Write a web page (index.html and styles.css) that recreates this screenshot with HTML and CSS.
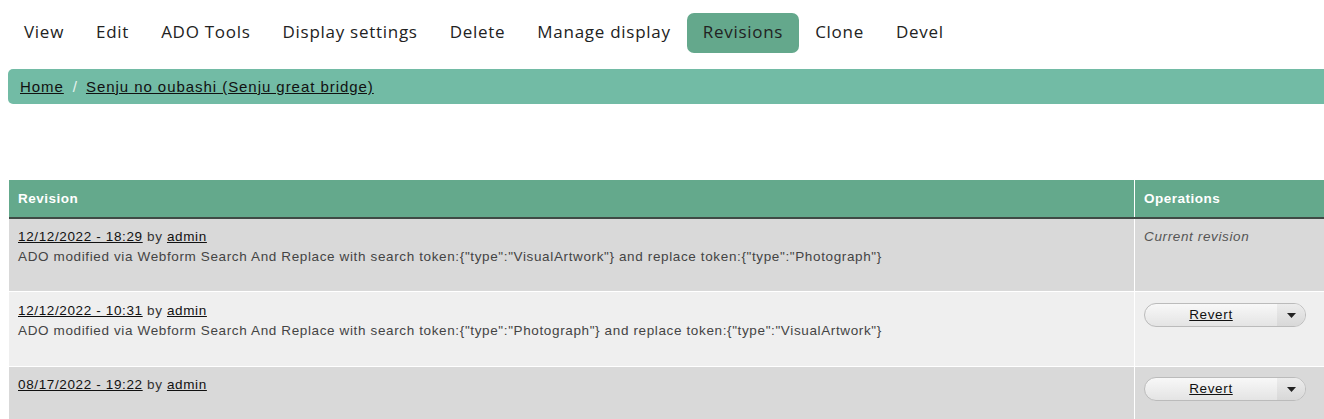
FILE: index.html
```html
<!DOCTYPE html>
<html>
<head>
<meta charset="utf-8">
<link rel="stylesheet" href="styles.css">
</head>
<body>
<nav class="tabs">
  <a class="tab" href="#">View</a>
  <a class="tab" href="#">Edit</a>
  <a class="tab" href="#">ADO Tools</a>
  <a class="tab" href="#">Display settings</a>
  <a class="tab" href="#">Delete</a>
  <a class="tab" href="#">Manage display</a>
  <a class="tab active" href="#">Revisions</a>
  <a class="tab" href="#">Clone</a>
  <a class="tab" href="#">Devel</a>
</nav>
<div class="breadcrumb">
  <a href="#">Home</a><span class="sep">/</span><a href="#">Senju no oubashi (Senju great bridge)</a>
</div>
<table class="revisions">
  <thead>
    <tr><th class="col-rev">Revision</th><th class="col-ops">Operations</th></tr>
  </thead>
  <tbody>
    <tr class="odd">
      <td><div class="meta"><a href="#">12/12/2022 - 18:29</a> by <a href="#">admin</a></div>
        <div class="msg">ADO modified via Webform Search And Replace with search token:{"type":"VisualArtwork"} and replace token:{"type":"Photograph"}</div></td>
      <td class="ops"><em class="current">Current revision</em></td>
    </tr>
    <tr class="even">
      <td><div class="meta"><a href="#">12/12/2022 - 10:31</a> by <a href="#">admin</a></div>
        <div class="msg">ADO modified via Webform Search And Replace with search token:{"type":"Photograph"} and replace token:{"type":"VisualArtwork"}</div></td>
      <td class="ops"><div class="dropbutton"><a class="main" href="#">Revert</a><span class="toggle"><svg width="9" height="5" viewBox="0 0 9 5"><path d="M0 0h9L4.5 5z" fill="#222"/></svg></span></div></td>
    </tr>
    <tr class="odd">
      <td><div class="meta"><a href="#">08/17/2022 - 19:22</a> by <a href="#">admin</a></div>
        <div class="msg">&nbsp;</div></td>
      <td class="ops"><div class="dropbutton"><a class="main" href="#">Revert</a><span class="toggle"><svg width="9" height="5" viewBox="0 0 9 5"><path d="M0 0h9L4.5 5z" fill="#222"/></svg></span></div></td>
    </tr>
  </tbody>
</table>
</body>
</html>
```
FILE: styles.css
```css
html, body { margin: 0; padding: 0; background: #fff; }
body { padding: 0 0 0 8px; overflow: hidden; width: 1324px; box-sizing: border-box; }

.tabs { display: flex; align-items: center; height: 40px; margin-top: 13px; }
.tab {
  font-family: "Open Sans", "DejaVu Sans", sans-serif;
  font-size: 17px; color: #222; text-decoration: none;
  padding: 0 16px; height: 40px; line-height: 38px; border-radius: 7px;
  letter-spacing: 0.72px;
}
.tab.active { background: #64a88c; }

.breadcrumb {
  margin-top: 16px; height: 35px; background: #72bba5;
  border-radius: 5px 0 0 5px;
  display: flex; align-items: center; padding-left: 12px;
  font-family: "Liberation Sans", Arial, sans-serif; font-size: 15px; letter-spacing: 0.95px;
}
.breadcrumb a { color: #111; text-decoration: underline; }
.breadcrumb .sep { color: #e8f4ef; margin: 0 8px 0 9px; }

.revisions {
  margin-top: 76px; margin-left: 1px; width: 1315px;
  border-collapse: collapse;
  font-family: "Liberation Sans", Arial, sans-serif; font-size: 13.5px; color: #444;
  letter-spacing: 0.63px;
}
.revisions th {
  background: #64a98c; color: #fff; text-align: left; font-weight: bold;
  height: 37px; padding: 0 9px; border-bottom: 2px solid #3f4a45; letter-spacing: 0.5px;
}
.revisions th.col-ops { border-left: 1px solid #fff; width: 171px; }
.revisions td { vertical-align: top; padding: 10px 9px 0; border-top: 1px solid #fff; }
.revisions td.ops { border-left: 1px solid #fff; }
.revisions tr.odd td { background: #d9d9d9; height: 62px; }
.revisions tr.even td { background: #efefef; height: 64px; }
.revisions tr.even td { padding-top: 11px; height: 63px; }
.meta { color: #333; line-height: 16px; }
.meta a { color: #111; text-decoration: underline; }
.msg { margin-top: 4px; line-height: 16px; color: #444; }
.current { color: #555; }

.dropbutton {
  display: flex; width: 160px; height: 22px; margin-top: 0;
  border: 1px solid #bbb; border-radius: 12px; overflow: hidden;
  background: linear-gradient(#f8f8f8, #e4e4e4);
}
.dropbutton .main { flex: 1; text-align: center; line-height: 22px; color: #111; text-decoration: underline; font-size: 13.5px; }
.dropbutton .toggle { width: 28px; display: flex; align-items: center; justify-content: center; background: linear-gradient(#ececec, #d8d8d8); }
```
